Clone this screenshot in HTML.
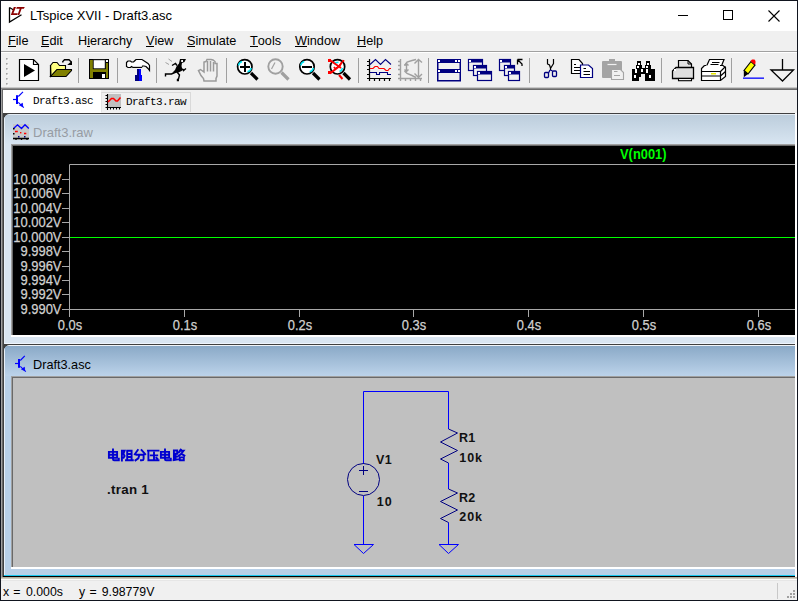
<!DOCTYPE html>
<html><head><meta charset="utf-8">
<style>
*{margin:0;padding:0;box-sizing:border-box}
html,body{width:798px;height:601px;overflow:hidden;background:#f0f0f0;font-family:"Liberation Sans",sans-serif;position:relative}
.a{position:absolute}
.t{position:absolute;white-space:nowrap;line-height:1}
.menu{font-size:12.7px;color:#000;top:35px}
.menu u{text-decoration:none;border-bottom:1px solid #000;display:inline-block;line-height:10px}
.yl{position:absolute;left:0;width:61.5px;text-align:right;font-size:14px;color:#d0d0d0;line-height:15px;white-space:nowrap;-webkit-text-stroke:0.25px #d0d0d0;transform:scaleX(0.925);transform-origin:100% 0}
.xl{position:absolute;top:317.7px;width:60px;text-align:center;font-size:14px;color:#d0d0d0;line-height:15px;white-space:nowrap;-webkit-text-stroke:0.25px #d0d0d0;transform:scaleX(0.92);transform-origin:50% 0}
.lab{position:absolute;font-size:12.5px;font-weight:bold;color:#101010;line-height:1;white-space:nowrap;letter-spacing:0.3px}
.st{top:586.4px;font-size:12.3px;color:#000}
</style></head><body>
<!-- window frame -->
<div class="a" style="left:0;top:0;width:798px;height:1px;background:#11151f"></div>
<div class="a" style="left:0;top:0;width:1px;height:601px;background:#11151f"></div>
<div class="a" style="left:797px;top:0;width:1px;height:601px;background:#11151f"></div>
<div class="a" style="left:0;top:600px;width:798px;height:1px;background:#11151f"></div>
<!-- title bar -->
<div class="a" style="left:1px;top:1px;width:796px;height:30px;background:#fff"></div>
<svg class="a" style="left:0;top:0" width="30" height="30" viewBox="0 0 30 30">
  <path d="M9.5 7.5 V22 L21.5 14.8" fill="none" stroke="#000" stroke-width="1.3"/>
  <path d="M9.5 7.5 L13.2 9.8" fill="none" stroke="#000" stroke-width="1.2"/>
  <path d="M13.8 7 H16 L13.4 13.2 H17.8 L17.2 15 H10.8 Z" fill="#8b0000"/>
  <path d="M16.8 7 H24.8 L23.8 8.8 H21.6 L19.3 15 H17.5 L19.7 8.8 H16.2 Z" fill="#8b0000"/>
</svg>
<div class="t" style="left:30px;top:9px;font-size:13px;color:#000">LTspice XVII - Draft3.asc</div>
<div class="a" style="left:678px;top:15px;width:10px;height:1px;background:#000"></div>
<div class="a" style="left:723px;top:10px;width:10px;height:10px;border:1px solid #000"></div>
<svg class="a" style="left:768px;top:10px" width="12" height="12" viewBox="0 0 12 12"><path d="M0.5 0.5 L11.5 11.5 M11.5 0.5 L0.5 11.5" stroke="#000" stroke-width="1.1"/></svg>
<!-- menu bar -->
<div class="a" style="left:1px;top:31px;width:796px;height:20px;background:#f0f0f0"></div>
<div class="t menu" style="left:8px"><u>F</u>ile</div>
<div class="t menu" style="left:41px"><u>E</u>dit</div>
<div class="t menu" style="left:78px">H<u>i</u>erarchy</div>
<div class="t menu" style="left:146px"><u>V</u>iew</div>
<div class="t menu" style="left:187px"><u>S</u>imulate</div>
<div class="t menu" style="left:250px"><u>T</u>ools</div>
<div class="t menu" style="left:295px"><u>W</u>indow</div>
<div class="t menu" style="left:357px"><u>H</u>elp</div>
<div class="a" style="left:1px;top:51px;width:796px;height:1px;background:#a0a0a0"></div>
<div class="a" style="left:1px;top:52px;width:796px;height:1px;background:#fff"></div>
<!-- toolbar -->
<div class="a" style="left:1px;top:53px;width:796px;height:35px;background:#f0f0f0"></div>
<div class="a" style="left:1px;top:87px;width:796px;height:1px;background:#c8c8c8"></div>
<div class="a" style="left:1px;top:88px;width:796px;height:1px;background:#8a8a8a"></div>
<div class="a" style="left:1px;top:89px;width:796px;height:1px;background:#696969"></div>
<svg class="a" style="left:0;top:0" width="798" height="90" viewBox="0 0 798 90">
<!-- grip -->
<g fill="#fff"><rect x="7" y="59" width="1.5" height="1.5"/><rect x="7" y="64" width="1.5" height="1.5"/><rect x="7" y="69" width="1.5" height="1.5"/><rect x="7" y="74" width="1.5" height="1.5"/><rect x="7" y="79" width="1.5" height="1.5"/><rect x="7" y="84" width="1.5" height="1.5"/></g><g fill="#a0a0a0"><rect x="6" y="58" width="1.6" height="1.6"/><rect x="6" y="63" width="1.6" height="1.6"/><rect x="6" y="68" width="1.6" height="1.6"/><rect x="6" y="73" width="1.6" height="1.6"/><rect x="6" y="78" width="1.6" height="1.6"/><rect x="6" y="83" width="1.6" height="1.6"/></g>
<!-- separators -->
<g fill="#a0a0a0"><rect x="78" y="58" width="1" height="25"/><rect x="117" y="58" width="1" height="25"/><rect x="156" y="58" width="1" height="25"/><rect x="226" y="58" width="1" height="25"/><rect x="358" y="58" width="1" height="25"/><rect x="428" y="58" width="1" height="25"/><rect x="529" y="58" width="1" height="25"/><rect x="661" y="58" width="1" height="25"/><rect x="731" y="58" width="1" height="25"/></g>
<!-- new (run) doc -->
<path d="M19.5 59.5 H33.5 L38.5 64.5 V80.5 H19.5 Z" fill="#fff" stroke="#000" stroke-width="1.2"/>
<path d="M33.5 59.5 V64.5 H38.5" fill="none" stroke="#000" stroke-width="1.2"/>
<path d="M24 64 L35 70.5 L24 77 Z" fill="#000"/>
<!-- open folder -->
<path d="M50.5 65.5 L53 62.5 H57 L59.5 65.5 H65.5 V70 H57 L51 76.5 Z" fill="#ffff80" stroke="#000" stroke-width="1.1"/>
<path d="M50.5 77 V65" stroke="#000" stroke-width="1.2"/>
<path d="M57 69.5 H71.5 V70.5 L66 76.5 H50.5 Z" fill="#808000" stroke="#000" stroke-width="1.1"/>
<path d="M62.8 62.5 V61.5 L64.5 59.8 H69 L71 61.8" fill="none" stroke="#000" stroke-width="1.4"/>
<path d="M72 60.8 V65 H67.2 Z" fill="#000"/>
<!-- save -->
<rect x="89" y="59" width="20" height="20" fill="#000"/>
<rect x="90" y="60" width="3" height="18" fill="#808000"/>
<rect x="106" y="63" width="2" height="15" fill="#808000"/>
<rect x="90" y="69" width="18" height="3" fill="#808000"/>
<rect x="93.2" y="59.8" width="12" height="9" fill="#fff" stroke="#000" stroke-width="0.8"/>
<rect x="106" y="60" width="2" height="2" fill="#fff"/>
<rect x="102" y="74" width="3" height="4" fill="#fff"/>
<!-- hammer -->
<path d="M127 62 L128 61 H130.5 L131.5 62 L133.5 62 L134.5 61 L136 59.5 H142 L145 61.5 L148 63.5 L149.5 65.5 V70.5 L148 68.5 L146 66.5 L144 66 H142.5 L141.5 67.5 H133 L131.5 66.5 L130.5 67.5 H128 L126.5 66.5 V62.5 Z" fill="#fff" stroke="#000" stroke-width="1.2"/>
<path d="M133 66.5 H142" stroke="#c8c8c8" stroke-width="0.8"/>
<rect x="137" y="69" width="2" height="7" fill="#000080"/><rect x="139" y="69" width="2" height="7" fill="#0000ff"/>
<rect x="135" y="75" width="4" height="6" fill="#000080"/><rect x="139" y="75" width="3" height="6" fill="#0000ff"/>
<!-- run man -->
<g stroke="#a0a0a0" stroke-width="1"><path d="M168.5 59 L172 61.5 M165.5 62.5 L169 64.5"/></g>
<g fill="none" stroke="#000" stroke-width="1.4">
<path d="M172 65.5 L175.5 63.5 L177 65.5"/>
<path d="M183 69 L183.5 70.5 L186 68.5"/>
<path d="M176 72 L171.5 74 H165.5 V76.5"/>
<path d="M177 72 L179.5 75 L178.5 79 L177.5 79.5 V80.5 H179"/>
</g>
<path d="M180 59 H186 L184.5 62 L182 63 L181.5 66 L182 68 L183.5 69.5 L181.5 71 L178.5 72.5 L175 73 L172.5 72.5 L175 70 L176.5 66.5 L179 63.5 Z" fill="#000"/>
<rect x="181.2" y="60" width="1.8" height="2" fill="#fff"/>
<!-- hand (disabled) -->
<path d="M204 62 V72 L200.5 69.5 L198.5 70.5 L201 75.5 L203.5 78.5 L204 81 H216 V78.5 L217 76 V63.5 L215 63.5 V61.5 L213 60 L211 59.5 H207 L206 61.5 Z" fill="none" stroke="#9a9a9a" stroke-width="1.5"/>
<g stroke="#9a9a9a" stroke-width="1.5"><path d="M207.5 61 V71.5 M210.5 61 V71.5 M213.5 62 V71.5"/></g>
<!-- zoom in -->
<circle cx="244.8" cy="66.8" r="7.2" fill="#fff" stroke="#000" stroke-width="1.7"/>
<path d="M251 73 L257.5 79.5" stroke="#000" stroke-width="3.2"/>
<path d="M240 67 H250 M245 62 V72" stroke="#000" stroke-width="2"/>
<path d="M238.5 65.5 Q239 62.5 242 61.5" fill="none" stroke="#00e8f8" stroke-width="1.5"/>
<path d="M247.5 71.8 Q250.5 71 251.2 68" fill="none" stroke="#00e8f8" stroke-width="1.5"/>
<!-- zoom fit disabled -->
<circle cx="275.5" cy="66.5" r="7.2" fill="none" stroke="#a0a0a0" stroke-width="1.9"/>
<path d="M281.5 72.5 L288.5 79.5" stroke="#a0a0a0" stroke-width="3.2"/>
<path d="M271.5 69 L275 62.5" stroke="#a0a0a0" stroke-width="1.2"/>
<!-- zoom out -->
<circle cx="307" cy="66.8" r="7.2" fill="#fff" stroke="#000" stroke-width="1.7"/>
<path d="M313 73 L319.5 79.5" stroke="#000" stroke-width="3.2"/>
<path d="M302 67 H312" stroke="#000" stroke-width="2"/>
<path d="M300.7 65.5 Q301.2 62.5 304.2 61.5" fill="none" stroke="#00e8f8" stroke-width="1.5"/>
<path d="M309.7 71.8 Q312.7 71 313.4 68" fill="none" stroke="#00e8f8" stroke-width="1.5"/>
<!-- zoom full (red x) -->
<circle cx="337.5" cy="66.8" r="7.2" fill="#fff" stroke="#000" stroke-width="1.7"/>
<path d="M343.5 73 L350 79.5" stroke="#000" stroke-width="3.2"/>
<path d="M334 64 Q335 62.5 338.5 62.3 M339.5 71.5 Q342 70.5 342.5 68" fill="none" stroke="#00e8f8" stroke-width="1.5"/>
<path d="M329 59.5 L341 68 M330 73.5 L339.5 66 L342 62 M339 75 L342.5 79 M343.5 60 L343 62 M334 67 L336 69.5" stroke="#ff0000" stroke-width="2"/>
<rect x="328" y="59" width="3" height="3" fill="#f00"/><rect x="328" y="71" width="3" height="3" fill="#f00"/>
<!-- waveform icon -->
<g fill="none" stroke-width="1.1">
<path d="M369.5 59 V81 M367 78.5 H391 M367 61.5 H369.5 M367 65.5 H369.5 M367 69.5 H369.5 M367 74.5 H369.5 M374.5 78.5 V81 M379.5 78.5 V81 M384.5 78.5 V81 M389.5 78.5 V81" stroke="#000" stroke-width="1.2"/>
<path d="M370 64.5 L375.5 59.5 L380.5 64.5 L385.5 59.5 L391 64.5" stroke="#000080"/>
<path d="M370 68.5 H373 L375 66.5 H377.5 L379 68.5 H384 L386 70.5 H388 L389.5 68.5 H391" stroke="#ff0000"/>
<path d="M370 72.5 H376.5 V74.5 H379.5 V72.5 H387.5 V74.5 H391" stroke="#000080"/>
</g>
<!-- waveform 2 disabled -->
<g fill="none" stroke="#a0a0a0" stroke-width="1.4">
<path d="M400.5 59 V81 M398 78.5 H422 M398 61.5 H400.5 M398 65.5 H400.5 M398 69.5 H400.5 M398 74.5 H400.5 M405.5 78.5 V81 M410.5 78.5 V81 M415.5 78.5 V81 M420.5 78.5 V81"/>
<path d="M404.5 65.5 L407 62 L412 60.5 L416 59.5 M404.5 71 L407 73.5 L412 75.5 L416 77.5"/>
<path d="M406.5 63.5 V71.5 M404.5 65.5 L406.5 63.5 L408.5 65.5 M404.5 69.5 L406.5 71.5 L408.5 69.5"/>
<path d="M418.5 59.5 V77.5 M414.5 63.5 L418.5 59.5 L422 62.5 M414.5 73.5 L418.5 77.5 L422 74"/>
</g>
<!-- tile -->
<g fill="#000080">
<rect x="437" y="59" width="24" height="4"/><rect x="437" y="69" width="24" height="4"/><rect x="437" y="80" width="24" height="1.5"/>
<rect x="437" y="59" width="1.5" height="22"/><rect x="459.5" y="59" width="1.5" height="22"/>
</g>
<g fill="#fff"><rect x="438" y="60" width="2" height="2"/><rect x="455" y="60" width="2" height="2"/><rect x="458" y="60" width="2" height="2"/><rect x="438" y="70" width="2" height="2"/><rect x="455" y="70" width="2" height="2"/><rect x="458" y="70" width="2" height="2"/></g>
<!-- cascade -->
<g stroke="#000080" stroke-width="1.2" fill="#f0f0f0">
<rect x="468.5" y="59.5" width="14" height="11"/>
<rect x="473.5" y="65.5" width="13" height="10"/>
<rect x="477.5" y="71.5" width="14" height="9"/>
</g>
<g fill="#000080"><rect x="468" y="59" width="15" height="3.5"/><rect x="473" y="65" width="14" height="3.5"/><rect x="477" y="71" width="15" height="3.5"/></g>
<g fill="#fff"><rect x="469" y="60" width="2" height="2"/><rect x="474" y="66" width="2" height="2"/><rect x="478" y="72" width="2" height="2"/></g>
<!-- arrange -->
<g stroke="#000080" stroke-width="1.2" fill="#f0f0f0">
<rect x="499.5" y="59.5" width="11" height="11"/>
<rect x="504.5" y="65.5" width="10" height="10"/>
<rect x="508.5" y="71.5" width="11" height="9"/>
</g>
<g fill="#000080"><rect x="499" y="59" width="12" height="3.5"/><rect x="504" y="65" width="11" height="3.5"/><rect x="508" y="71" width="12" height="3.5"/></g>
<g fill="#fff"><rect x="500" y="60" width="2" height="2"/><rect x="505" y="66" width="2" height="2"/><rect x="509" y="72" width="2" height="2"/></g>
<path d="M517.5 59.5 H522.5 M517.5 59.5 V64.5 M518 60 L522 64 V66" fill="none" stroke="#000" stroke-width="1.3"/>
<!-- scissors -->
<path d="M547.5 59 V64 L549.5 65 L550.5 68 M553.5 59 V63.5 L552 66 L550.5 68.5 V70" fill="none" stroke="#000" stroke-width="1.2"/>
<rect x="544.5" y="72.5" width="4" height="5" rx="1" fill="none" stroke="#000080" stroke-width="1.3"/>
<rect x="552.5" y="71" width="4" height="5.5" rx="1" fill="none" stroke="#000080" stroke-width="1.3"/>
<path d="M548.5 73 L550 70 M552.5 71 L550.5 70" stroke="#000080" stroke-width="1.3"/>
<!-- copy -->
<path d="M571.5 59.5 H579 L582.5 63.5 V73.5 H571.5 Z" fill="#fff" stroke="#000" stroke-width="1.2"/>
<path d="M574 64.5 H576 M574 67.5 H580 M574 70.5 H580" stroke="#000" stroke-width="1"/>
<path d="M580.5 65 H588.5 L592.5 68.5 V77.5 H580.5 Z" fill="#fff" stroke="#000080" stroke-width="1.2"/>
<path d="M583.5 68.5 H586 M583.5 71.5 H590 M583.5 74.5 H590" stroke="#000" stroke-width="1"/>
<!-- paste disabled -->
<rect x="602" y="61" width="20" height="17" rx="1" fill="#a4a4a4"/>
<rect x="609" y="59" width="6" height="3" fill="#a4a4a4"/>
<path d="M607.5 64.5 H616.5" stroke="#f0f0f0" stroke-width="1.2"/>
<path d="M611.5 69.5 H620.5 L623.5 72.5 V79.5 H611.5 Z" fill="#f0f0f0" stroke="#a4a4a4" stroke-width="1.1"/>
<path d="M614 71.5 H617.5 M614 75.5 H620" stroke="#a4a4a4" stroke-width="1"/>
<!-- binoculars -->
<g fill="#000">
<rect x="637" y="61" width="4" height="5"/><rect x="646" y="61" width="4" height="5"/>
<rect x="636" y="65" width="6" height="5"/><rect x="645" y="65" width="6" height="5"/>
<rect x="632" y="69" width="7" height="12"/><rect x="645" y="69" width="10" height="12"/>
<rect x="638" y="68" width="7" height="6"/><rect x="638" y="74" width="3" height="3"/>
</g>
<g fill="#fff"><rect x="638" y="63" width="2" height="2"/><rect x="647" y="63" width="2" height="2"/><rect x="637" y="66" width="2" height="2"/><rect x="646" y="66" width="2" height="2"/><rect x="635" y="69" width="2" height="4"/><rect x="641" y="69" width="2" height="3"/><rect x="646" y="69" width="2" height="4"/><rect x="634" y="75" width="2" height="3"/><rect x="649" y="75" width="2" height="3"/></g>
<!-- print -->
<path d="M678.5 60.5 H688 L691.5 64 V67.5 H678.5 Z" fill="#e2e2e2" stroke="#000" stroke-width="1.2"/>
<path d="M688 60.5 V64 H691.5" fill="none" stroke="#000" stroke-width="1"/>
<path d="M676 67.5 H693.5 V78.5 H672.5 V71 Z" fill="#dedede" stroke="#000" stroke-width="1.3"/>
<rect x="674" y="69" width="2" height="2" fill="#fff"/>
<rect x="678.5" y="78.5" width="13" height="2.2" fill="#fff" stroke="#000" stroke-width="1.1"/>
<!-- print2 -->
<path d="M709.5 59.5 H724 L720.5 68.5 H705.5 Z" fill="#fff" stroke="#000" stroke-width="1.2"/>
<path d="M712 62.5 H719.5 M710.5 64.5 H718.5 M709.5 66.5 H717" stroke="#000" stroke-width="1"/>
<path d="M704.5 65.5 H706 M720 65.5 H723 L725.5 67.5 V76.5 L720.5 80.5 H701.5 V68.5 L704.5 65.5" fill="#fff" stroke="#000" stroke-width="1.2"/>
<path d="M701.5 71.5 H720.5 V80.5 M701.5 76 H720.5 M720.5 71.5 L725.5 66.5 M720.5 76 L725.5 71.5" fill="none" stroke="#000" stroke-width="1.2"/>
<rect x="711" y="73" width="5" height="1.5" fill="#e8e800"/>
<!-- pencil -->
<path d="M744 70.5 L751 61.5 L755 65 L748 74 Z" fill="#ffff00" stroke="#000" stroke-width="1.2"/>
<path d="M750.5 61 L752 59.5 H754.5 L755.5 61 V63.5 L754.5 64.5 Z" fill="#ff0000"/>
<path d="M743.8 70.5 V77.2 L748 74 Z" fill="#000"/>
<rect x="743" y="77.5" width="21" height="1.3" fill="#0000ff"/>
<!-- ground -->
<path d="M782.5 59 V70 M771 70 H793.5 L782.5 81 L771 70 Z" fill="none" stroke="#000" stroke-width="1.3"/>
</svg>

<!-- tab bar -->
<div class="a" style="left:1px;top:90px;width:796px;height:23px;background:#f0f0f0"></div>
<div class="a" style="left:3px;top:90px;width:98px;height:23px;background:#fff"></div>
<div class="a" style="left:101px;top:92px;width:90px;height:20px;border:1px solid #d9d9d9;border-left:1px solid #e4e4e4;border-bottom:none;background:#f0f0f0"></div>
<svg class="a" style="left:0;top:88px" width="200" height="24" viewBox="0 88 200 24">
 <g stroke="#0000ff" fill="none">
  <path d="M13 99.5 H16" stroke-width="1.2"/>
  <rect x="16" y="95.2" width="2" height="8.8" fill="#0000ff" stroke="none"/>
  <path d="M18.3 96.5 L23 91.8" stroke-width="1.1"/>
  <path d="M18.3 102.3 L23.8 107.6" stroke-width="1.1"/>
  <path d="M19.5 105.2 L22.5 103.3 L22.6 106.6 Z" stroke-width="0.8" fill="#0000ff"/>
 </g>
 <rect x="108" y="94" width="13" height="13.5" fill="#c0c0c0"/>
 <path d="M107.5 94 V110 M105.5 107.5 H121 M105.5 95.5 H107.5 M105.5 98.5 H107.5 M105.5 101.5 H107.5 M105.5 104.5 H107.5 M110.5 107.5 V109.5 M113.5 107.5 V109.5 M116.5 107.5 V109.5 M119.5 107.5 V109.5" stroke="#000" stroke-width="1.1" fill="none"/>
 <path d="M108 102 L111.5 98.5 H113.5 L116 101 H117.5 L120.5 97.5" stroke="#ff0000" stroke-width="1.6" fill="none"/>
</svg>
<div class="t" style="left:33px;top:96px;font-family:'Liberation Mono',monospace;font-size:11px;letter-spacing:-0.6px;color:#000">Draft3.asc</div>
<div class="t" style="left:126px;top:97px;font-family:'Liberation Mono',monospace;font-size:11px;letter-spacing:-0.6px;color:#000">Draft3.raw</div>

<!-- MDI client -->
<div class="a" style="left:1px;top:89px;width:1px;height:489px;background:#a0a0a0"></div>
<div class="a" style="left:2px;top:89px;width:1px;height:489px;background:#696969"></div>
<div class="a" style="left:3px;top:113px;width:792px;height:464px;background:#404040"></div>
<div class="a" style="left:795px;top:113px;width:2px;height:465px;background:#fff"></div>

<!-- waveform child -->
<div class="a" style="left:4px;top:114px;width:791px;height:230px;background:#d9e5f1;border-radius:6px 0 0 0;overflow:hidden">
  <div class="a" style="left:0;top:229px;width:791px;height:1px;background:#eef4fc"></div>
  <div class="a" style="left:0;top:0;width:791px;height:1px;background:#e4ecf4"></div>
  <div class="a" style="left:0;top:1px;width:791px;height:29px;background:linear-gradient(#bccddc,#d8e5f1)"></div>
  <div class="a" style="left:0;top:0;width:1px;height:231px;background:#e8f0f8"></div>
</div>
<svg class="a" style="left:12px;top:123px" width="18" height="18" viewBox="12 123 18 18">
 <rect x="13" y="124" width="16" height="16" fill="#c8c8c8"/>
 <path d="M13.5 128.5 L17.5 124.8 L21.5 128.5 L25 124.8 L28.8 128.5" stroke="#0000ff" stroke-width="1.3" fill="none"/>
 <rect x="13" y="128" width="1.5" height="1.5" fill="#000"/><rect x="13" y="133" width="1.5" height="1.5" fill="#000"/>
 <path d="M15 131.5 H17.8 M24 133.5 H26.3" stroke="#ff0000" stroke-width="1.3"/>
 <rect x="20" y="132" width="1.4" height="1.4" fill="#f00"/>
 <rect x="18" y="136" width="1.5" height="1.5" fill="#000080"/><rect x="24" y="136" width="1.5" height="1.5" fill="#000080"/>
 <path d="M13 138.5 H29 M16 139 V140 M21.5 139 V140 M27 139 V140" stroke="#000" stroke-width="1.3"/>
</svg>
<div class="t" style="left:33px;top:126px;font-size:13px;color:#979ca3">Draft3.raw</div>
<div class="a" style="left:11px;top:144px;width:784px;height:191px;background:#000;border-top:1px solid #a0a0a0;border-left:1px solid #a0a0a0"></div>
<div class="a" style="left:12px;top:145px;width:783px;height:1px;background:#696969"></div>
<div class="a" style="left:12px;top:145px;width:1px;height:190px;background:#696969"></div>
<div class="a" style="left:11px;top:335px;width:784px;height:2px;background:#fff"></div>
<svg class="a" style="left:0;top:0" width="798" height="340" viewBox="0 0 798 340">
 <g stroke="#a8a8a8" stroke-width="1" fill="none">
  <path d="M69.5 316 V164.5 H795"/>
  <path d="M69 309.5 H795"/>
  <path d="M62 179.5 H69"/><path d="M62 193.5 H69"/><path d="M62 208.5 H69"/><path d="M62 222.5 H69"/><path d="M62 237.5 H69"/><path d="M62 251.5 H69"/><path d="M62 266.5 H69"/><path d="M62 280.5 H69"/><path d="M62 294.5 H69"/><path d="M62 309.5 H69"/>
  <path d="M69.5 309 V317"/><path d="M184.5 309 V317"/><path d="M299.5 309 V317"/><path d="M413.5 309 V317"/><path d="M528.5 309 V317"/><path d="M643.5 309 V317"/><path d="M758.5 309 V317"/>
 </g>
 <path d="M70 237.5 H795" stroke="#00ff00" stroke-width="1"/>
</svg>
<div class="t" style="left:620px;top:146.7px;font-size:14px;font-weight:bold;color:#00ff00;line-height:15px;transform:scaleX(0.92);transform-origin:0 0">V(n001)</div>
<div class="yl" style="top:171.7px">10.008V</div>
<div class="yl" style="top:185.7px">10.006V</div>
<div class="yl" style="top:200.7px">10.004V</div>
<div class="yl" style="top:214.7px">10.002V</div>
<div class="yl" style="top:229.7px">10.000V</div>
<div class="yl" style="top:243.7px">9.998V</div>
<div class="yl" style="top:258.7px">9.996V</div>
<div class="yl" style="top:272.7px">9.994V</div>
<div class="yl" style="top:286.7px">9.992V</div>
<div class="yl" style="top:301.7px">9.990V</div>

<div class="xl" style="left:39.5px">0.0s</div>
<div class="xl" style="left:154.5px">0.1s</div>
<div class="xl" style="left:269.5px">0.2s</div>
<div class="xl" style="left:383.5px">0.3s</div>
<div class="xl" style="left:498.5px">0.4s</div>
<div class="xl" style="left:613.5px">0.5s</div>
<div class="xl" style="left:728.5px">0.6s</div>


<!-- schematic child -->
<div class="a" style="left:4px;top:345px;width:791px;height:231px;background:#b8d0e8;border-radius:6px 0 0 0;overflow:hidden">
  <div class="a" style="left:0;top:0;width:791px;height:1px;background:#f0f4f8"></div>
  <div class="a" style="left:0;top:1px;width:791px;height:30px;background:linear-gradient(#8aa9c7,#bcd3ea)"></div>
  <div class="a" style="left:0;top:0;width:1px;height:231px;background:#e8f0f8"></div>
</div>
<svg class="a" style="left:12px;top:352px" width="18" height="22" viewBox="12 352 18 22">
 <g stroke="#0000ff" fill="none">
  <path d="M15 363.5 H18" stroke-width="1.2"/>
  <rect x="18" y="359" width="2" height="8.8" fill="#0000ff" stroke="none"/>
  <path d="M20.3 360.5 L24.8 355.8" stroke-width="1.1"/>
  <path d="M20.3 366.3 L25.8 371.6" stroke-width="1.1"/>
  <path d="M21.5 369.2 L24.5 367.3 L24.6 370.6 Z" stroke-width="0.8" fill="#0000ff"/>
 </g>
</svg>
<div class="t" style="left:33px;top:359px;font-size:12.7px;color:#000">Draft3.asc</div>
<div class="a" style="left:11px;top:376px;width:784px;height:191px;background:#c0c0c0;border-top:1px solid #a0a0a0;border-left:1px solid #a0a0a0"></div>
<div class="a" style="left:12px;top:377px;width:783px;height:1px;background:#696969"></div>
<div class="a" style="left:12px;top:377px;width:1px;height:190px;background:#696969"></div>
<div class="a" style="left:11px;top:567px;width:784px;height:2px;background:#fff"></div>
<div class="a" style="left:4px;top:575px;width:791px;height:1px;background:#19c8f0"></div>
<div class="a" style="left:3px;top:576px;width:792px;height:1px;background:#000"></div>

<!-- schematic drawing -->
<svg class="a" style="left:0;top:0" width="798" height="601" viewBox="0 0 798 601">
 <g fill="none" stroke="#0000ff" stroke-width="1">
  <path d="M363.5 464 V391.5 H448.5 V429"/>
  <path d="M363.5 496 V544"/>
  <path d="M448.5 463 V489"/>
  <path d="M448.5 522.5 V544"/>
  <path d="M354 544.5 H373.5 L363.5 553.5 Z"/>
  <path d="M439 544.5 H458.5 L448.5 553.5 Z"/>
 </g>
 <g fill="none" stroke="#000080" stroke-width="1">
  <circle cx="363.5" cy="479.5" r="16"/>
  <path d="M359 470.5 H368 M363.5 466 V475"/>
  <path d="M359 491.5 H368"/>
  <path d="M448.5 429 L457.5 433 L440.5 442 L457.5 450.5 L440.5 459 L448.5 463"/>
  <path d="M448.5 489 L457.5 493 L440.5 501.5 L457.5 510 L440.5 518.5 L448.5 522.5"/>
 </g>
</svg>
<div class="lab" style="left:376px;top:454px">V1</div>
<div class="lab" style="left:376.7px;top:496px;letter-spacing:1px">10</div>
<div class="lab" style="left:459px;top:432px">R1</div>
<div class="lab" style="left:459.3px;top:452px;letter-spacing:0.9px">10k</div>
<div class="lab" style="left:459px;top:492px">R2</div>
<div class="lab" style="left:459.3px;top:511px;letter-spacing:0.9px">20k</div>
<div class="lab" style="left:107px;top:482.5px;font-size:13.3px">.tran 1</div>
<svg class="a" style="left:100px;top:444px" width="100" height="22" viewBox="100 444 100 22">
<g fill="none" stroke="#0000d0" stroke-width="1.9" stroke-linecap="square">
 <!-- 电 -->
 <g transform="translate(108,449)">
  <path d="M0.9 2.9 H9.1 V8.7 H0.9 Z M0.9 5.8 H9.1 M5 0.5 V10.2 Q5 11.2 6 11.2 H10.8 V9.8"/>
 </g>
 <!-- 阻 -->
 <g transform="translate(121,449)">
  <path d="M0.9 11.5 V1.7 H3.6 L2.4 4.6 L3.6 7 L2.6 8.6"/>
  <path d="M6.2 1.7 H10.6 V10.8 M6.2 1.7 V10.8 M6.2 5 H10.6 M6.2 8 H10.6 M5 11.2 H11.8"/>
 </g>
 <!-- 分 -->
 <g transform="translate(134,449)">
  <path d="M3.8 1 L0.8 5.2 M7.6 1 L11.2 5.2 M2.5 5.8 H9.6 V10 Q9.6 11.3 8 11.3 H7 M5.2 6.5 L4.3 9.3 L1.5 11.3"/>
 </g>
 <!-- 压 -->
 <g transform="translate(147,449)">
  <path d="M0.9 1.6 H11.5 M1.4 1.6 V11.2 M1.4 11.2 H11.5 M3.8 6.4 H10.2 M7 3.6 V11 M9.3 8.8 L10.3 9.6"/>
 </g>
 <!-- 电 -->
 <g transform="translate(160,449)">
  <path d="M0.9 2.9 H9.1 V8.7 H0.9 Z M0.9 5.8 H9.1 M5 0.5 V10.2 Q5 11.2 6 11.2 H10.8 V9.8"/>
 </g>
 <!-- 路 -->
 <g transform="translate(173,449)">
  <path d="M0.9 1.5 H4.2 V4.8 H0.9 Z M2.6 4.8 V10.8 M2.6 7.6 H4.5 M0.6 11.2 L5 10.4 M0.9 6.8 V11"/>
  <path d="M7.8 0.6 L5.8 3.4 M7 1.8 H10.6 L7.6 5.6 L5.8 6.6 M8.2 4.6 L11.4 6.6 M6.8 8.4 H10.8 V11.2 H6.8 Z"/>
 </g>
</g>
</svg>


<!-- status bar -->
<div class="a" style="left:1px;top:577px;width:796px;height:1px;background:#b4b0a0"></div>
<div class="a" style="left:1px;top:578px;width:796px;height:1px;background:#cdc9bc"></div>
<div class="a" style="left:1px;top:579px;width:796px;height:1px;background:#fcfcfc"></div>
<div class="a" style="left:1px;top:580px;width:796px;height:1px;background:#e6e6e6"></div>
<div class="a" style="left:1px;top:581px;width:796px;height:19px;background:#f0f0f0"></div>
<div class="a" style="left:777px;top:583px;width:1px;height:16px;background:#c8c8c8"></div>
<svg class="a" style="left:785px;top:590px" width="12" height="12" viewBox="0 0 12 12"><g fill="#a0a0a0"><rect x="8" y="0" width="2" height="2"/><rect x="5" y="3" width="2" height="2"/><rect x="8" y="3" width="2" height="2"/><rect x="2" y="6" width="2" height="2"/><rect x="5" y="6" width="2" height="2"/><rect x="8" y="6" width="2" height="2"/></g></svg>
<div class="t st" style="left:3px">x</div><div class="t st" style="left:13.3px">=</div><div class="t st" style="left:26px">0.000s</div>
<div class="t st" style="left:79px">y</div><div class="t st" style="left:89.5px">=</div><div class="t st" style="left:101.7px">9.98779V</div>

</body></html>
